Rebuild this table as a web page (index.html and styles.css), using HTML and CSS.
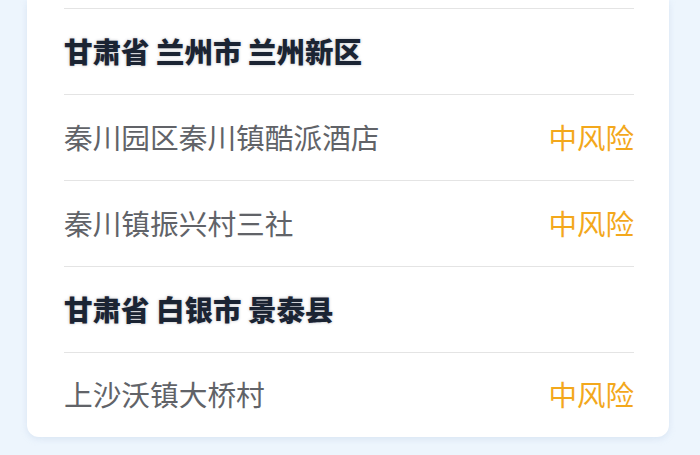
FILE: index.html
```html
<!DOCTYPE html>
<html lang="zh-CN">
<head>
<meta charset="utf-8">
<link rel="stylesheet" href="styles.css">
</head>
<body>
<div class="page">
  <div class="card">
    <div class="lead"></div>
    <div class="row head"><span class="area">甘肃省 兰州市 兰州新区</span></div>
    <div class="row"><span class="place">秦川园区秦川镇酷派酒店</span><span class="risk">中风险</span></div>
    <div class="row"><span class="place">秦川镇振兴村三社</span><span class="risk">中风险</span></div>
    <div class="row head"><span class="area">甘肃省 白银市 景泰县</span></div>
    <div class="row last"><span class="place">上沙沃镇大桥村</span><span class="risk">中风险</span></div>
  </div>
</div>
</body>
</html>
```

FILE: styles.css
```css
html, body {
  margin: 0;
  padding: 0;
  background: #edf5fd;
}
body {
  font-family: "Noto Sans CJK SC", "Noto Sans", sans-serif;
  width: 700px;
  height: 455px;
  overflow: hidden;
}
.page {
  padding: 0 31px 0 27px;
}
.card {
  background: #ffffff;
  border-radius: 0 0 12px 12px;
  padding: 0 35px 0 37px;
  box-shadow: 0 2px 6px rgba(180, 200, 225, 0.35);
}
.lead {
  height: 8px;
}
.row {
  height: 86px;
  border-top: 1px solid #e4e4e4;
  display: flex;
  align-items: center;
  justify-content: space-between;
  box-sizing: border-box;
  padding-bottom: 3px;
}
.row.last {
  height: 85px;
}
.area {
  font-size: 28.5px;
  font-weight: 900;
  color: #1b2433;
  text-shadow: 0 0 3px rgba(30, 40, 60, 0.3);
}
.place {
  font-size: 28.7px;
  color: #616368;
}
.risk {
  font-size: 28.5px;
  color: #f3a81c;
}
```
